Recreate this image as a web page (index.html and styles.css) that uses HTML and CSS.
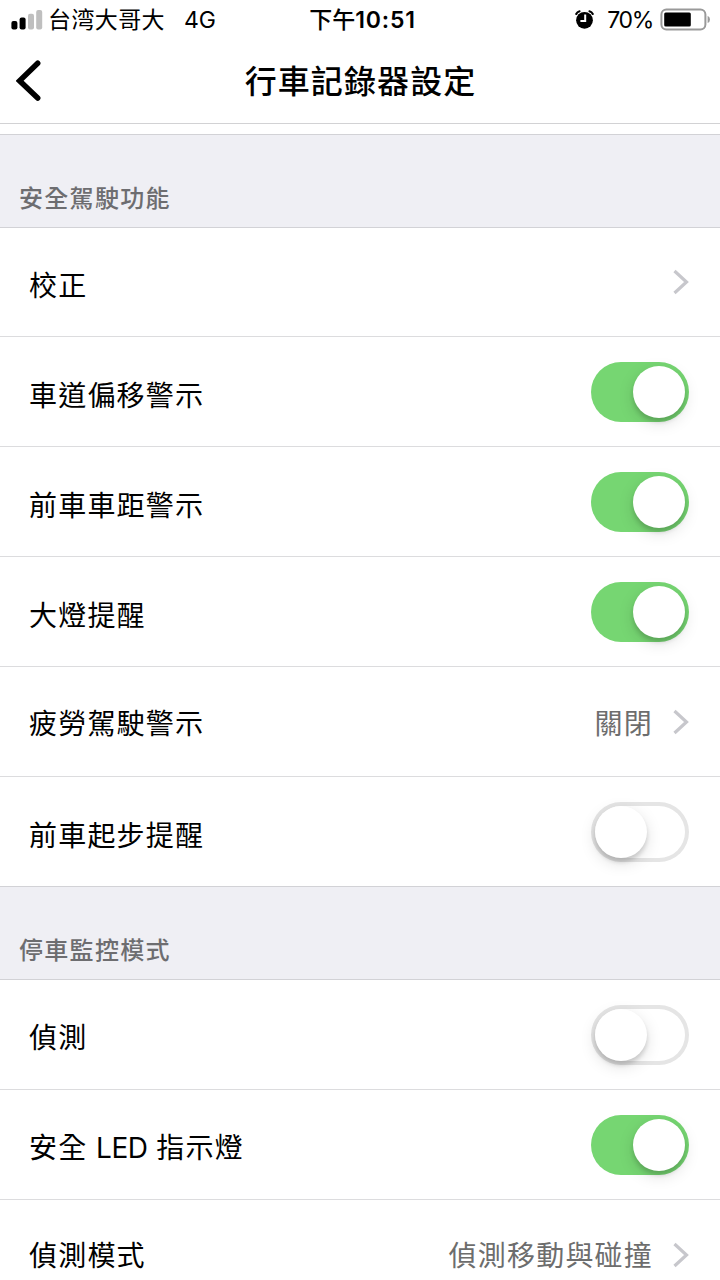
FILE: index.html
```
<!DOCTYPE html>
<html lang="zh-Hant">
<head>
  <meta charset="UTF-8" />
  <meta name="viewport" content="width=device-width, initial-scale=1" />
  <title>行車記錄器設定</title>
  <link rel="stylesheet" href="styles.css">
</head>
<body>

  <!-- Status bar -->
  <div class="status-bar">
    <div class="status-left">
      <svg class="signal" width="32" height="20" viewBox="0 0 32 20">
        <rect x="0.4" y="11" width="6" height="8.4" rx="2" />
        <rect x="8.6" y="7.5" width="6" height="11.9" rx="2" />
        <rect class="off" x="17" y="3.8" width="6" height="15.6" rx="2" />
        <rect class="off" x="25.2" y="0" width="6" height="19.4" rx="2" />
      </svg>
      <span class="carrier">台湾大哥大</span>
      <span class="network">4G</span>
    </div>
    <div class="clock">下午<b>10:51</b></div>
    <div class="status-right">
      <svg class="alarm" width="20" height="20" viewBox="0 0 20 20">
        <circle cx="9.5" cy="10.3" r="8.4" />
        <path class="bell" d="M1.2 4Q2.2 1.8 4.6 1.2M14.4 1.2Q16.8 1.8 17.8 4" />
        <path class="hands" d="M10.2 4.6V11H5.4" />
      </svg>
      <span class="percent">70%</span>
      <svg class="battery" width="50" height="24" viewBox="0 0 50 24">
        <rect class="case" x="1.4" y="1.4" width="44" height="20" rx="5" />
        <rect x="4.2" y="4.4" width="26.6" height="14" rx="1.5" />
        <path class="cap" d="M47.6 7.8Q50 8.8 50 11.4T47.6 15Z" />
      </svg>
    </div>
  </div>

  <!-- Navigation -->
  <header class="nav-bar">
    <svg class="back" width="26" height="42" viewBox="0 0 26 42">
      <path d="M21.7 3.2L3.6 20.8L21.7 38" />
    </svg>
    <h1>行車記錄器設定</h1>
  </header>

  <main class="settings">
    <div class="row-tail"></div>

    <h2 class="section-title">安全駕駛功能</h2>
    <ul class="group driving">
      <li class="row">
        <span class="label">校正</span>
        <svg class="chevron" viewBox="0 0 16 26"><path d="M1.5 2L13.5 13L1.5 24" /></svg>
      </li>
      <li class="row">
        <span class="label">車道偏移警示</span>
        <span class="switch on"></span>
      </li>
      <li class="row">
        <span class="label">前車車距警示</span>
        <span class="switch on"></span>
      </li>
      <li class="row">
        <span class="label">大燈提醒</span>
        <span class="switch on"></span>
      </li>
      <li class="row link">
        <span class="label">疲勞駕駛警示</span>
        <span class="value">關閉</span>
        <svg class="chevron" viewBox="0 0 16 26"><path d="M1.5 2L13.5 13L1.5 24" /></svg>
      </li>
      <li class="row">
        <span class="label">前車起步提醒</span>
        <span class="switch"></span>
      </li>
    </ul>

    <h2 class="section-title">停車監控模式</h2>
    <ul class="group parking">
      <li class="row">
        <span class="label">偵測</span>
        <span class="switch"></span>
      </li>
      <li class="row">
        <span class="label">安全 <span class="latin">LED</span> 指示燈</span>
        <span class="switch on"></span>
      </li>
      <li class="row link">
        <span class="label">偵測模式</span>
        <span class="value">偵測移動與碰撞</span>
        <svg class="chevron" viewBox="0 0 16 26"><path d="M1.5 2L13.5 13L1.5 24" /></svg>
      </li>
    </ul>
  </main>

</body>
</html>
```
FILE: styles.css
```
* {
  box-sizing: border-box;
}

body {
  margin: 0;
  height: 1280px;
  overflow: hidden;
  background: #fff;
  color: #000;
  font-family: Inter, "Noto Sans CJK TC", sans-serif;
}

/* Status bar */
.status-bar {
  display: grid;
  grid-template-columns: 1fr auto 1fr;
  align-items: center;
  height: 40px;
  padding: 0 10px 0 11px;
  font-size: 23px;
  line-height: 40px;
}

.status-left,
.status-right {
  display: flex;
  align-items: center;
}

.status-right {
  justify-content: flex-end;
}

.signal .off {
  fill: #bfbfbf;
}

.carrier {
  margin-left: 5px;
  letter-spacing: 0.4px;
}

.network {
  margin-left: 19px;
}

.clock {
  padding-left: 4px;
  font-weight: 500;
}

.clock b {
  font-weight: 600;
  letter-spacing: 0.8px;
}

.alarm {
  margin-right: 12px;
}

.alarm path {
  fill: none;
  stroke: #000;
  stroke-width: 2;
  stroke-linecap: round;
}

.alarm .hands {
  stroke: #fff;
  stroke-linecap: butt;
}

.percent {
  margin-right: 7px;
  letter-spacing: -1.3px;
}

.battery .case {
  fill: none;
  stroke: #999;
  stroke-width: 2;
}

.battery .cap {
  fill: #999;
}

/* Navigation */
.nav-bar {
  display: grid;
  grid-template-columns: 60px 1fr 60px;
  align-items: center;
  height: 84px;
  padding-bottom: 1px;
  border-bottom: 1px solid #d2d2d4;
}

.back {
  margin-left: 16px;
}

.back path {
  fill: none;
  stroke: #000;
  stroke-width: 5.5;
  stroke-linecap: round;
}

.nav-bar h1 {
  margin: 0;
  padding: 0 0 5px 1px;
  text-align: center;
  font-size: 32px;
  font-weight: 500;
  letter-spacing: 1.1px;
}

/* Settings list */
.row-tail {
  height: 10px;
}

.section-title {
  height: 94px;
  margin: 0;
  padding: 47px 19px 0;
  border-top: 1px solid #d2d2d6;
  border-bottom: 1px solid #d2d2d6;
  background: #efeff4;
  color: #6d6d70;
  font-size: 24px;
  font-weight: 500;
  line-height: 34px;
  letter-spacing: 1.3px;
}

.group {
  margin: 0;
  padding: 0;
  list-style: none;
}

.row {
  display: flex;
  align-items: center;
  height: 110px;
  padding: 0 31px 0 29px;
  border-bottom: 1px solid #dcdcde;
  font-size: 28px;
  line-height: 40px;
  letter-spacing: 1.2px;
}

.driving .row:first-child,
.group .row:last-child {
  height: 109px;
}

.group .row:last-child {
  border-bottom: none;
}

.label {
  flex: 1;
  padding-top: 8px;
}

.parking .label {
  padding-top: 6px;
}

.link .label,
.value {
  padding-top: 4px;
}

.parking .link .label,
.parking .value {
  padding-top: 2px;
}

.latin {
  letter-spacing: -0.4px;
  margin: 0 -0.5px;
}

.value {
  margin-right: 20px;
  color: #6d6d6d;
}

.chevron {
  width: 16px;
  height: 26px;
}

.chevron path {
  fill: none;
  stroke: #c7c7cc;
  stroke-width: 3.2;
}

.switch {
  display: flex;
  align-items: center;
  width: 98px;
  height: 60px;
  padding: 0 4px;
  border-radius: 30px;
  background: #fff;
  box-shadow: inset 0 0 0 4px #e5e5e5;
}

.switch::before {
  content: "";
  width: 52px;
  height: 52px;
  border-radius: 50%;
  background: #fff;
  box-shadow: 0 4px 4px rgba(0, 0, 0, 0.14), 0 5px 16px rgba(0, 0, 0, 0.13);
}

.switch.on {
  justify-content: flex-end;
  background: #76d672;
  box-shadow: none;
}
```
